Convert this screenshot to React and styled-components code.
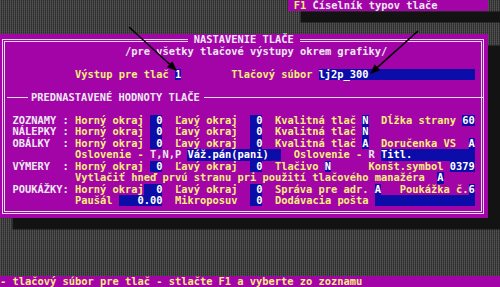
import React from 'react';
import styled, { createGlobalStyle } from 'styled-components';

// text-mode grid: 80 x 25 cells in 500 x 287
const CW = 6.25;
const RH = 11.48;

const PURPLE = '#a204a8';
const BLUE = '#0c0ca8';
const WHITE = '#eeeaf2';
const YELLOW = '#f7ef7a';
const FRAME = '#ecdcf0';

const GlobalStyle = createGlobalStyle`
  html, body {
    margin: 0;
    padding: 0;
    background: #1a1a1a;
  }
`;

const rows = [
  {
    indent: 2,
    parts: [
      ['w', 'ZOZNAMY : '], ['y', 'Horný okraj '], ['f', ' 0'], ['y', '  Ľavý okraj  '], ['f', ' 0'],
      ['y', '  Kvalitná tlač '], ['f', 'N'], ['y', '  Dĺžka strany '], ['f', '60'],
    ],
  },
  {
    indent: 2,
    parts: [
      ['w', 'NÁLEPKY : '], ['y', 'Horný okraj '], ['f', ' 0'], ['y', '  Ľavý okraj  '], ['f', ' 0'],
      ['y', '  Kvalitná tlač '], ['f', 'N'],
    ],
  },
  {
    indent: 2,
    parts: [
      ['w', 'OBÁLKY  : '], ['y', 'Horný okraj '], ['f', ' 0'], ['y', '  Ľavý okraj  '], ['f', ' 0'],
      ['y', '  Kvalitná tlač '], ['f', 'A'], ['y', '  Doručenka VS  '], ['f', 'A'],
    ],
  },
  {
    indent: 12,
    parts: [
      ['y', 'Oslovenie - '], ['w', 'T,N,P'], ['y', ' '], ['f', 'Váž.pán(pani)  '],
      ['y', '  Oslovenie - '], ['w', 'R'], ['y', ' '], ['f', 'Titl.          '],
    ],
  },
  {
    indent: 2,
    parts: [
      ['w', 'VÝMERY  : '], ['y', 'Horný okraj '], ['f', ' 0'], ['y', '  Ľavý okraj  '], ['f', ' 0'],
      ['y', '  Tlačivo '], ['f', 'N'], ['y', '      Konšt.symbol '], ['f', '0379'],
    ],
  },
  {
    indent: 12,
    parts: [['y', 'Vytlačiť hneď prvú stranu pri použití tlačového manažéra  '], ['f', 'A']],
  },
  {
    indent: 2,
    parts: [
      ['w', 'POUKÁŽKY: '], ['y', 'Horný okraj'], ['f', '  0'], ['y', '  Ľavý okraj  '], ['f', ' 0'],
      ['y', '  Správa pre adr. '], ['f', 'A'], ['y', '   Poukážka č.'], ['f', '6'],
    ],
  },
  {
    indent: 12,
    parts: [
      ['y', 'Paušál '], ['f', '   0.00'], ['y', '  Mikroposuv  '], ['f', ' 0'],
      ['y', '  Dodávacia pošta '], ['f', '                '],
    ],
  },
];

const Arrow = ({ from, tip }) => {
  const dx = tip[0] - from[0];
  const dy = tip[1] - from[1];
  const len = Math.hypot(dx, dy);
  const ux = dx / len;
  const uy = dy / len;
  const bx = tip[0] - ux * 10;
  const by = tip[1] - uy * 10;
  const px = -uy * 4;
  const py = ux * 4;
  return (
    <g>
      <line x1={from[0]} y1={from[1]} x2={bx} y2={by} stroke="#000" strokeWidth="1.6" />
      <polygon
        points={`${tip[0]},${tip[1]} ${bx + px},${by + py} ${bx - px},${by - py}`}
        fill="#000"
      />
    </g>
  );
};

const App = () => {
  return (
    <>
      <GlobalStyle />
      <Screen>
        <HintBar>
          <Txt $c="y"> F1</Txt>
          <Txt $c="w"> Číselník typov tlače</Txt>
        </HintBar>

        <Dialog>
          <Line $indent={30}>
            <Title> NASTAVENIE TLAČE </Title>
          </Line>
          <Line $indent={20}>
            <Txt $c="w">/pre všetky tlačové výstupy okrem grafiky/</Txt>
          </Line>
          <Line />
          <Line $indent={12}>
            <Txt $c="y">Výstup pre tlač </Txt>
            <Field>1</Field>
            <Txt $c="y">        Tlačový súbor </Txt>
            <Field>{'lj2p_300'.padEnd(25, ' ')}</Field>
          </Line>
          <Line />
          <Separator>
            <Rule $w={21} />
            <SepText>PREDNASTAVENÉ HODNOTY TLAČE</SepText>
            <Rule />
          </Separator>
          <Line />
          {rows.map((row, i) => (
            <Line key={i} $indent={row.indent}>
              {row.parts.map(([kind, text], j) =>
                kind === 'f' ? (
                  <Field key={j}>{text}</Field>
                ) : (
                  <Txt key={j} $c={kind}>
                    {text}
                  </Txt>
                )
              )}
            </Line>
          ))}
          <Line />
        </Dialog>

        <StatusBar>- tlačový súbor pre tlač - stlačte F1 a vyberte zo zoznamu</StatusBar>

        <Overlay viewBox="0 0 500 287">
          <Arrow from={[129, 27]} tip={[177, 71]} />
          <Arrow from={[418, 31]} tip={[370, 74]} />
        </Overlay>
      </Screen>
    </>
  );
};

export default App;

const Screen = styled.div`
  position: relative;
  display: flex;
  flex-direction: column;
  width: 500px;
  height: 287px;
  overflow: hidden;
  background-color: #363636;
  background-image: repeating-linear-gradient(
      90deg,
      rgba(255, 255, 255, 0.14) 0 1px,
      transparent 1px 2px
    ),
    repeating-linear-gradient(0deg, rgba(0, 0, 0, 0.18) 0 1px, transparent 1px 2px);
  font-family: 'DejaVu Sans Mono', 'Liberation Mono', monospace;
  font-size: 10.38px;
  font-weight: bold;
`;

const HintBar = styled.div`
  display: flex;
  height: ${RH}px;
  line-height: ${RH}px;
  width: ${32 * CW}px;
  margin-left: ${46 * CW}px;
  background: ${PURPLE};
  white-space: pre;
  box-shadow: ${2 * CW}px ${RH}px 0 #131313;
`;

const Dialog = styled.div`
  position: relative;
  display: flex;
  flex-direction: column;
  width: ${78 * CW}px;
  height: ${16 * RH}px;
  margin-top: ${2 * RH}px;
  background: ${PURPLE};
  box-shadow: ${2 * CW}px ${RH}px 0 #131313;

  &::before {
    content: '';
    position: absolute;
    top: 5px;
    left: 1.5px;
    right: 3.5px;
    bottom: 4px;
    border: 3px double ${FRAME};
    pointer-events: none;
  }
`;

const Line = styled.div`
  position: relative;
  z-index: 1;
  display: flex;
  height: ${RH}px;
  line-height: ${RH}px;
  padding-left: ${({ $indent }) => ($indent || 0) * CW}px;
  white-space: pre;
`;

const Txt = styled.span`
  color: ${({ $c }) => ($c === 'y' ? YELLOW : WHITE)};
`;

const Field = styled.span`
  background: ${BLUE};
  color: #ffffff;
`;

const Title = styled.span`
  background: ${PURPLE};
  color: ${WHITE};
`;

const Separator = styled.div`
  position: relative;
  z-index: 1;
  display: flex;
  align-items: center;
  height: ${RH}px;
  padding: 0 4px 0 7px;
`;

const Rule = styled.div`
  height: 1px;
  background: ${FRAME};
  ${({ $w }) => ($w ? `width: ${$w}px;` : 'flex: 1;')}
`;

const SepText = styled.span`
  margin: 0 4px 0 3px;
  color: ${WHITE};
  white-space: pre;
  line-height: ${RH}px;
`;

const StatusBar = styled.div`
  margin-top: auto;
  height: ${RH}px;
  line-height: ${RH}px;
  background: ${PURPLE};
  color: ${YELLOW};
  white-space: pre;
`;

const Overlay = styled.svg`
  position: absolute;
  inset: 0;
  width: 500px;
  height: 287px;
  pointer-events: none;
  z-index: 5;
`;
